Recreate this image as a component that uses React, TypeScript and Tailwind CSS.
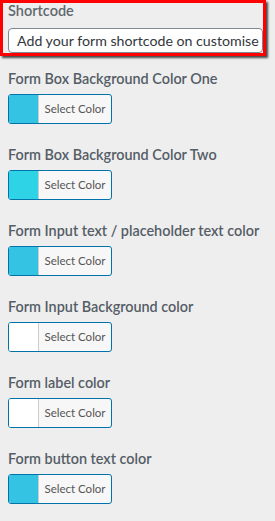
import React from "react";

const pickers = [
  { label: "Form Box Background Color One", color: "#35c3e3" },
  { label: "Form Box Background Color Two", color: "#2ed3e6" },
  { label: "Form Input text / placeholder text color", color: "#35c3e3" },
  { label: "Form Input Background color", color: "#ffffff" },
  { label: "Form label color", color: "#ffffff" },
  { label: "Form button text color", color: "#35c3e3" },
];

function ColorButton({ color }: { color: string }) {
  return (
    <div className="flex h-[30px] w-[104px] overflow-hidden rounded-[3px] border border-[#0073aa] bg-[#f7f7f7]">
      <div className="w-[30px] border-r border-[#cccccc]" style={{ backgroundColor: color }} />
      <div className="flex flex-1 items-center justify-center text-[11.5px] text-[#555555]">
        Select Color
      </div>
    </div>
  );
}

export default function App() {
  return (
    <div className="h-[521px] w-[275px] overflow-hidden bg-[#eeeeee] font-['Lato','Noto_Sans',sans-serif]">
      <div className="w-[266px] border-[3px] border-[#ff0000] pl-[5px] shadow-[2px_2px_2px_rgba(0,0,0,0.7)]">
        <div className="mt-[-1px] text-[14.5px] leading-[18px] font-semibold text-[#62686e]">Shortcode</div>
        <div className="mt-[8px] h-[25px] overflow-hidden whitespace-nowrap rounded-[4px] border border-[#7e8993] bg-white pl-[8px] text-[14.2px] leading-[23px] text-[#32373c]">
          Add your form shortcode on customise
        </div>
      </div>
      <div className="px-[8px] pt-[11px]">
        {pickers.map((p) => (
          <div key={p.label} className="mb-[19px]">
            <div className="whitespace-nowrap pt-[2px] text-[14.4px] leading-[20px] font-semibold text-[#555d66]">
              {p.label}
            </div>
            <div className="mt-[5px]">
              <ColorButton color={p.color} />
            </div>
          </div>
        ))}
      </div>
    </div>
  );
}
